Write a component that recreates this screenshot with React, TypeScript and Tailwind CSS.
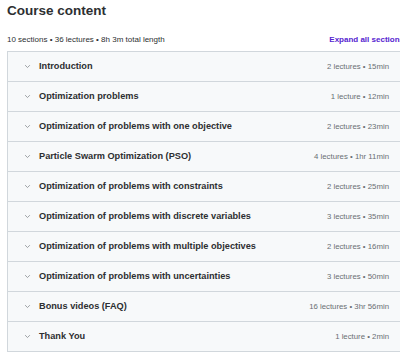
import React from 'react';

const SECTIONS = [
  { title: 'Introduction', meta: '2 lectures • 15min' },
  { title: 'Optimization problems', meta: '1 lecture • 12min' },
  { title: 'Optimization of problems with one objective', meta: '2 lectures • 23min' },
  { title: 'Particle Swarm Optimization (PSO)', meta: '4 lectures • 1hr 11min' },
  { title: 'Optimization of problems with constraints', meta: '2 lectures • 25min' },
  { title: 'Optimization of problems with discrete variables', meta: '3 lectures • 35min' },
  { title: 'Optimization of problems with multiple objectives', meta: '2 lectures • 16min' },
  { title: 'Optimization of problems with uncertainties', meta: '3 lectures • 50min' },
  { title: 'Bonus videos (FAQ)', meta: '16 lectures • 3hr 56min' },
  { title: 'Thank You', meta: '1 lecture • 2min' },
];

const Chevron = () => (
  <svg width="7" height="7" viewBox="0 0 10 10" className="shrink-0">
    <path d="M2 3.5 L5 6.5 L8 3.5" fill="none" stroke="#8a8f93" strokeWidth="1.2" strokeLinecap="round" strokeLinejoin="round" />
  </svg>
);

export default function App() {
  return (
    <div className="w-[400px] h-[352px] overflow-hidden bg-white pl-[7px] text-[#2d2f31]" style={{ fontFamily: '"Liberation Sans", Arial, sans-serif' }}>
      <h2 className="w-[400px] text-[13.5px] font-bold leading-[21px]">Course content</h2>
      <div className="flex w-[400px] items-center justify-between pr-[3px] pt-[14px] pb-[6px]">
        <span className="text-[8px] leading-[10px] text-[#2d2f31]">10 sections • 36 lectures • 8h 3m total length</span>
        <span className="whitespace-nowrap text-[8px] font-bold leading-[10px] text-[#5624d0]">Expand all sections</span>
      </div>
      <div className="w-[400px] border-t border-l border-[#d1d7dc]">
        {SECTIONS.map((s, i) => (
          <div key={i} className="flex h-[30px] items-center justify-between border-b border-[#d1d7dc] bg-[#f7f9fa] pl-[16px] pr-[18px]">
            <div className="flex items-center gap-[8px]">
              <Chevron />
              <span className="text-[9.2px] font-bold">{s.title}</span>
            </div>
            <span className="text-[7.8px] text-[#6a6f73]">{s.meta}</span>
          </div>
        ))}
      </div>
    </div>
  );
}
